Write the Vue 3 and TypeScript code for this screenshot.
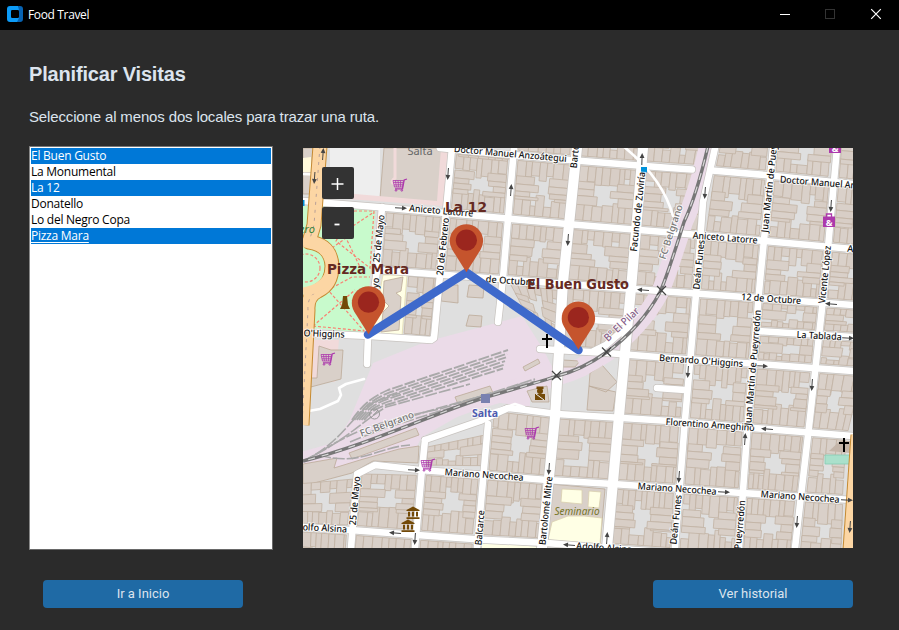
<script setup lang="ts">
import { ref } from 'vue'

type Pt = [number, number]
interface Lot { d: string; tone: number }
interface StreetLabel { t: string; x: number; y: number; r: number; w: number; c?: string }

const places = ['El Buen Gusto', 'La Monumental', 'La 12', 'Donatello', 'Lo del Negro Copa', 'Pizza Mara']
const selected = ref<string[]>(['El Buen Gusto', 'La 12', 'Pizza Mara'])
const focused = ref('Pizza Mara')

function toggle(name: string) {
  focused.value = name
  selected.value = selected.value.includes(name)
    ? selected.value.filter((n) => n !== name)
    : [...selected.value, name]
}

/* East-west streets, north to south */
const H: Record<string, Pt[]> = {
  top: [[303, 85], [853, 125]],
  A: [[440, 148], [480, 152], [570, 160], [670, 168], [715, 170.5], [765, 175], [853, 184]],
  B: [[303, 201], [377, 207], [480, 216], [567, 224], [670, 232.5], [765, 241], [853, 249]],
  C: [[377, 270], [487, 278], [540, 282], [633, 289], [695, 293.5], [758, 298], [853, 305]],
  T: [[758, 331], [853, 337]],
  D: [[540, 349], [607, 353], [670, 358], [758, 364], [853, 371]],
  E: [[480, 405], [518, 409], [557, 414], [623, 418], [670, 421], [778, 430], [853, 436]],
  F: [[303, 470], [352, 470], [375, 465], [420, 470], [487, 475], [547, 480], [613, 484], [670, 488], [742, 493], [853, 500]],
  G: [[303, 527], [350, 530], [417, 535], [487, 540], [547, 543], [607, 548], [853, 566]],
  end: [[303, 590], [853, 640]],
}
/* North-south streets, west to east */
const V: Record<string, Pt[]> = {
  left: [[298, 100], [286, 640]],
  m25: [[382, 207], [377, 270], [368, 337], [357, 475], [350, 548], [346, 600]],
  f20: [[456, 100], [452, 148], [440, 275], [432, 340], [422, 469], [415, 548], [411, 600]],
  g3: [[517, 100], [514, 148], [503, 278], [498, 323], [488, 424], [477, 548], [473, 600]],
  bart: [[580, 100], [577, 148], [563, 282], [555, 417], [542, 548], [538, 600]],
  facu: [[646, 100], [643, 148], [632, 278], [619, 416], [607, 548], [603, 600]],
  dean: [[724, 100], [715, 148], [703, 202], [697, 283], [685, 420], [675, 548], [671, 600]],
  juan: [[777, 100], [773, 148], [760, 281], [748, 420], [739, 548], [735, 600]],
  vice: [[840, 100], [837, 148], [825, 281], [810, 418], [795, 548], [790, 600]],
  right: [[912, 100], [906, 148], [890, 281], [850, 440], [846, 548], [846, 600]],
}

function lerpAt(line: Pt[], q: number, axis: 0 | 1): number {
  const o = axis === 0 ? 1 : 0
  for (let i = 1; i < line.length; i++) {
    if (q <= line[i][axis] || i === line.length - 1) {
      const a = line[i - 1]
      const b = line[i]
      return a[o] + ((q - a[axis]) / (b[axis] - a[axis])) * (b[o] - a[o])
    }
  }
  return 0
}
function cross(h: string, v: string): Pt {
  let x = 580
  let y = 300
  for (let i = 0; i < 12; i++) {
    y = lerpAt(H[h], x, 0)
    x = lerpAt(V[v], y, 1)
  }
  return [x, y]
}

let seed = 91
function rnd(): number {
  seed = (seed * 16807) % 2147483647
  return seed / 2147483647
}

const lots: Lot[] = []
function fillQuad(q: Pt[], inset = 5) {
  const [a, b, c, d] = q
  const W = Math.hypot(b[0] - a[0], b[1] - a[1])
  const Hh = Math.hypot(d[0] - a[0], d[1] - a[1])
  const P = (px: number, py: number): string => {
    const u = (inset + px) / W
    const v = (inset + py) / Hh
    const x = (1 - u) * (1 - v) * a[0] + u * (1 - v) * b[0] + u * v * c[0] + (1 - u) * v * d[0]
    const y = (1 - u) * (1 - v) * a[1] + u * (1 - v) * b[1] + u * v * c[1] + (1 - u) * v * d[1]
    return `${x.toFixed(1)} ${y.toFixed(1)}`
  }
  const w = W - inset * 2
  const h = Hh - inset * 2
  const box = (x0: number, y0: number, x1: number, y1: number) => {
    if (x1 - x0 < 1.5 || y1 - y0 < 1.5) return
    lots.push({ d: `M${P(x0, y0)}L${P(x1, y0)}L${P(x1, y1)}L${P(x0, y1)}Z`, tone: Math.floor(rnd() * 3) })
  }
  const band = h * 0.3
  let x = 0
  while (x < w) {
    const n = Math.min(w, x + 5 + rnd() * 5.5)
    box(x, 0, n, band * (rnd() < 0.12 ? 0.6 : 0.82 + rnd() * 0.5))
    x = n
  }
  x = 0
  while (x < w) {
    const n = Math.min(w, x + 5 + rnd() * 5.5)
    box(x, h - band * (rnd() < 0.12 ? 0.6 : 0.82 + rnd() * 0.5), n, h)
    x = n
  }
  let y = band * 0.95
  const stop = h - band * 0.95
  while (y < stop) {
    const n = Math.min(stop, y + 5 + rnd() * 4.5)
    box(0, y, w * (0.26 + rnd() * 0.2), n)
    box(w * (0.56 + rnd() * 0.22), y, w, n)
    y = n
  }
}
function block(h1: string, h2: string, v1: string, v2: string) {
  fillQuad([cross(h1, v1), cross(h1, v2), cross(h2, v2), cross(h2, v1)])
}
const vs = ['g3', 'bart', 'facu', 'dean', 'juan', 'vice', 'right']
for (let i = 0; i < vs.length - 1; i++) {
  block('top', 'A', vs[i], vs[i + 1])
  block('A', 'B', vs[i], vs[i + 1])
  block('B', 'C', vs[i], vs[i + 1])
  if (i > 0 && i < 4) block('C', 'D', vs[i], vs[i + 1])
  if (i > 3) {
    block('C', 'T', vs[i], vs[i + 1])
    block('T', 'D', vs[i], vs[i + 1])
  }
  if (i > 1) block('D', 'E', vs[i], vs[i + 1])
  block('E', 'F', vs[i], vs[i + 1])
  if (i !== 1) block('F', 'G', vs[i], vs[i + 1])
  block('G', 'end', vs[i], vs[i + 1])
}
block('A', 'B', 'f20', 'g3')
block('B', 'C', 'f20', 'g3')
block('B', 'C', 'm25', 'f20')
block('F', 'G', 'f20', 'g3')
block('F', 'G', 'm25', 'f20')
fillQuad([[298, 480], [357, 474], [351, 530], [298, 527]], 4)
block('G', 'end', 'left', 'm25')
block('G', 'end', 'm25', 'f20')
block('G', 'end', 'f20', 'g3')
fillQuad([[423, 443], [489, 425], [487, 475], [422, 470]])
fillQuad([[405, 272], [440, 275], [433, 340], [400, 337]], 4)
fillQuad([[503, 279], [563, 284], [560, 350], [527, 318]])
fillQuad([[456, 145], [514, 150], [512, 166], [454, 160]], 4)

const line = (p: Pt[]): string => 'M' + p.map((q) => q.join(' ')).join('L')
const majors = [line(V.bart), line(V.facu)]
const minors = [
  ...['B', 'C', 'D', 'G', 'T'].map((k) => line(H[k])),
  line([[440, 148], [480, 152], [570, 160], [670, 168], [692, 169.5]]),
  line([[712, 170.5], [765, 175], [853, 184]]),
  line([[425, 440], [480, 421], [508, 408], [518, 409], [557, 414], [623, 418], [670, 421], [778, 430], [853, 436]]),
  line(V.dean), line(V.juan), line(V.vice),
  line([[382, 207], [377, 270], [368, 337], [367, 364]]),
  line([[351, 548], [357, 474], ...H.F.slice(2)]),
  line([[452, 148], [440, 275], [434, 338], [431, 340], [370, 336]]),
  line([[303, 333], [370, 336]]),
  line([[425, 440], [422, 469], [415, 548]]),
  line([[514, 148], [503, 278], [498, 322]]),
  line([[488, 424], [477, 548]]),
  line([[657, 388], [685, 390]]),
  line([[593, 320], [623, 322]]),
  line([[594, 351], [606, 345], [628, 326]]),
]
const thin = [
  'M303 174L325 175', 'M303 412L320 409L338 401L341 395L339 388L346 384L364 379',
  'M623 146Q644 163 657 182Q668 198 673 216', 'M487 413L515 404L524 407',
]

const rail = 'M708 146C702 172 693 203 684 222C677 244 667 277 660 292C648 315 628 337 607 352C587 366 573 372 557 376C540 382 510 390 480 399C430 415 365 446 303 461'
const yard = Array.from({ length: 6 }, (_, i) =>
  `M${352 + i * 2.4} 420C${362 + i * 2} ${406 + i} ${370 + i} ${398 + i * 2} ${388 + i} ${390 + i * 2.6}L${508 - i} ${350 + i * 3.7}`)
const tails = [
  'M303 461C340 444 350 418 372 403L400 393', 'M303 461C347 440 361 422 386 407L470 384',
  'M310 458C350 433 370 423 440 409L535 379', 'M319 455C360 467 377 447 410 445',
  'M350 442C400 420 470 405 520 384', 'M370 432C420 410 480 398 535 381',
]

const labels: StreetLabel[] = [
  { t: 'Doctor Manuel Anzoátegui', x: 510, y: 157, r: 5, w: 113 },
  { t: 'Aniceto Latorre', x: 441, y: 214, r: 5, w: 64 },
  { t: 'de Octubre', x: 510, y: 284, r: 4, w: 49 },
  { t: 'Doctor Manuel Anzoátegui', x: 836, y: 187, r: 4.5, w: 113 },
  { t: 'Aniceto Latorre', x: 725, y: 241, r: 4.5, w: 65 },
  { t: 'Aniceto', x: 864, y: 253, r: 4.5, w: 34 },
  { t: '12 de Octubre', x: 771, y: 302, r: 4, w: 60 },
  { t: 'La Tablada', x: 819, y: 339, r: 3, w: 45 },
  { t: "Bernardo O'Higgins", x: 701, y: 364, r: 4, w: 84 },
  { t: "O'Higgins", x: 324, y: 337, r: 2, w: 41 },
  { t: 'Florentino Ameghino', x: 710, y: 428, r: 4, w: 89 },
  { t: 'Mariano Necochea', x: 484, y: 478, r: 4, w: 79 },
  { t: 'Mariano Necochea', x: 677, y: 492, r: 4, w: 79 },
  { t: 'Mariano Necochea', x: 800, y: 500, r: 4, w: 79 },
  { t: 'Adolfo Alsina', x: 319, y: 531, r: 3, w: 56 },
  { t: 'Adolfo Alsina', x: 604, y: 551, r: 4, w: 56 },
  { t: '25 de Mayo', x: 382, y: 239, r: -84, w: 48 },
  { t: 'Mayo', x: 378, y: 290, r: -84, w: 24 },
  { t: '20 de Febrero', x: 446, y: 247, r: -84, w: 58 },
  { t: 'Bartolomé', x: 579, y: 146, r: -84, w: 45 },
  { t: 'Facundo de Zuviría', x: 641, y: 212, r: -84, w: 80 },
  { t: 'Deán Funes', x: 702, y: 265, r: -84, w: 50 },
  { t: 'Juan Martín de Pueyrredón', x: 774, y: 174, r: -84, w: 118 },
  { t: 'Vicente López', x: 828, y: 275, r: -84, w: 58 },
  { t: 'Juan Martín de Pueyrredón', x: 756, y: 368, r: -85, w: 116 },
  { t: '25 de Mayo', x: 358, y: 501, r: -85, w: 49 },
  { t: 'Balcarce', x: 483, y: 528, r: -85, w: 35 },
  { t: 'Bartolomé Mitre', x: 549, y: 511, r: -84, w: 69 },
  { t: 'Deán Funes', x: 679, y: 520, r: -84, w: 50 },
  { t: 'Pueyrredón', x: 743, y: 525, r: -85, w: 49 },
  { t: 'FC Belgrano', x: 388, y: 427, r: -20, w: 57, c: 'rail-name' },
  { t: 'FC Belgrano', x: 674, y: 233, r: -72, w: 57, c: 'rail-name' },
  { t: 'B° El Pilar', x: 624, y: 327, r: -43, w: 44, c: 'area' },
]

/* One-way arrows: position and heading */
const arrows: [number, number, number][] = [
  [401, 208, 3], [448, 174, 94], [511, 190, -86], [568, 240, 94], [642, 159, -88], [705, 193, 94],
  [831, 206, 94], [643, 290, 184], [831, 304, 184], [848, 338, 3], [762, 366, 3], [688, 372, 94],
  [812, 385, 94], [767, 429, 184], [745, 439, -86], [679, 477, 94], [724, 492, 3], [847, 500, 3],
  [797, 522, 94], [549, 469, 94], [414, 470, 3], [395, 533, 184], [415, 539, 94], [569, 545, 184],
  [607, 538, -86], [323, 154, -86], [314.5, 178, 94], [850, 527, 94],
]
const carts: Pt[] = [[400, 185], [328, 359], [428, 465], [532, 433]]
const museums: Pt[] = [[413, 513], [408, 526]]
const crossings: Pt[] = [[661.5, 290.5], [606.5, 352], [556.5, 375.5]]
const bags: Pt[] = [[829, 221], [835, 147]]
const pins = [
  { name: 'La 12', x: 466.4, y: 240.7, tx: 445, ty: 211.5, w: 42 },
  { name: 'Pizza Mara', x: 368.5, y: 302.7, tx: 327, ty: 274, w: 82 },
  { name: 'El Buen Gusto', x: 578.4, y: 318, tx: 527, ty: 289, w: 102 },
]
</script>

<template>
  <div class="window">
    <header class="titlebar">
      <svg class="logo" width="16" height="16" viewBox="0 0 16 16">
        <path d="M3 0H11L13 3V13L11 16H3Q0 16 0 13V3Q0 0 3 0Z" fill="#0c9bf7" />
        <path d="M11 0H13Q16 0 16 3V13Q16 16 13 16H10L12 12V4Z" fill="#0763b3" />
        <rect x="4" y="4" width="8" height="8" rx="1.2" fill="#000" />
      </svg>
      <span class="app-name">Food Travel</span>
      <svg class="controls" width="119" height="30" viewBox="780 0 119 30">
        <path d="M780 14.5H790" stroke="#fff" />
        <rect x="825.5" y="9.5" width="9" height="9" fill="none" stroke="#333" />
        <path d="M871.2 9.2L880.8 18.8M880.8 9.2L871.2 18.8" stroke="#fff" stroke-width="1.2" />
      </svg>
    </header>

    <main class="content">
      <h1>Planificar Visitas</h1>
      <p class="hint">Seleccione al menos dos locales para trazar una ruta.</p>

      <div class="panes">
        <ul class="listbox">
          <li
            v-for="p in places"
            :key="p"
            :class="{ on: selected.includes(p), focus: focused === p }"
            @click="toggle(p)"
          ><span>{{ p }}</span></li>
        </ul>

        <svg class="map" width="550" height="400" viewBox="303 148 550 400">
          <defs>
            <g id="cart" fill="none" stroke="#ac39ac">
              <path d="M-7 -4.5H3.5L2.5 2H-5.5ZM-4.5 -4.5L-3.6 2M-2 -4.5L-1.6 2M.6 -4.5V2M-6.5 -2.4H3M-6 -.2H2.7" stroke-width=".8" />
              <path d="M7 -6L4.2 -5L2.5 3.8H-5" stroke-width="1.3" />
              <circle cx="-4" cy="5.4" r=".8" /><circle cx="1.8" cy="5.4" r=".8" />
            </g>
            <g id="museum" fill="#734a08">
              <path d="M-6.5 -3L0 -6.5L6.5 -3V-2H-6.5ZM-5 -1.3H-3V3.5H-5ZM-1 -1.3H1V3.5H-1ZM3 -1.3H5V3.5H3ZM-6.5 4.2H6.5V6H-6.5Z" />
            </g>
            <g id="arrow"><path d="M-6 0H3" stroke="#444" stroke-width="1" /><path d="M6 0L1 -2.4V2.4Z" fill="#444" /></g>
          </defs>

          <rect x="303" y="148" width="550" height="400" fill="#dfdfdf" />

          <!-- avenue surroundings, square and park -->
          <path d="M330 148H380V197H330Z" fill="#eeeeee" />
          <path d="M303 148H318L313 194H303Z" fill="#d9d0c9" stroke="#bba998" stroke-width=".8" />
          <path d="M303 158L311 157V172H303Z" fill="#fff9db" />
          <path d="M384 148H446L442 203L380 198Z" fill="#d9d0c9" stroke="#bba998" stroke-width=".8" />
          <path d="M441 148H448L443 206L320 197V191L437 201Z" fill="#f1dada" />
          <path d="M395 148V178Q388 184 398 184" fill="none" stroke="#f1dada" stroke-width="3" />
          <path d="M303 206H376L371 265L366 333L311 328L303 300Z" fill="#c8facc" />
          <g fill="none" stroke="#fa8072" stroke-width="1.2" stroke-dasharray="3 2">
            <path d="M354 211H374L370 268L336 241L354 211" />
            <path d="M332 248L346 238L360 267M326 209L344 232L374 212" />
            <path d="M313 326L364 331L328 290L352 277H370M313 326L355 290" />
            <circle cx="306" cy="268" r="14" />
          </g>
          <path d="M383 275H407L402 336L372 333Z" fill="#ffffe5" stroke="#e5ddb0" stroke-width=".8" />
          <path d="M384 281L403 277L401 291L396 293L401 297L399 330L381 332L383 312L389 306L383 300Z" fill="#d9d0c9" stroke="#bba998" stroke-width=".8" />
          <path d="M309 340H339L335 382L306 378Z" fill="#f1dada" />
          <path d="M319 346L331 350L343 350L341 379L307 388L309 378H317Z" fill="#d9d0c9" stroke="#bba998" stroke-width=".8" />

          <!-- freight yard -->
          <path d="M373 363L425 342L522 316L543 349L557 376L530 386L530 407L485 401L422 437L417 446L343 471L312 472L303 463V455L332 450L350 419Z" fill="#ebdbe8" />
          <path :d="rail" fill="none" stroke="#ebdbe8" stroke-width="19" />
          <g fill="#d9d0c9" stroke="#bba998" stroke-width=".8">
            <path d="M443 285H458V303L441 301ZM469 285L484 286L483 298L467 297ZM469 315L482 316L481 327L466 326Z" />
            <path d="M523 367L538 359L540 363L525 371ZM349 453L416 428L419 435L352 459Z" />
            <path d="M303 464L337 458L334 468L360 460L399 449L419 446L418 463L373 461L352 473L303 486Z" />
            <path d="M455 397L490 386L493 393L458 404ZM527 391L547 386L549 402L532 402Z" />
            <path d="M590 373L602 365L617 382L606 392L589 386ZM589 386L616 392L613 411L587 410ZM563 360L580 361L575 367H563Z" />
          </g>

          <!-- building lots -->
          <path v-for="(l, i) in lots" :key="i" :d="l.d" :class="['lot', 'tone' + l.tone]" />

          <!-- seminary -->
          <path d="M551 484L605 489L600 545L547 541Z" fill="#d9d0c9" stroke="#bba998" stroke-width=".8" />
          <path d="M562 489L582 490V504L561 502ZM589 491L601 492L599 508L588 507ZM552 522L568 516H584L602 518L600 544L548 540Z" fill="#ffffe5" stroke="#d9cfae" stroke-width=".8" />
          <path d="M482 542L540 547V548H482Z" fill="#ffffe5" />
          <path d="M829 451L840 441H850V453Z" fill="#c4b5a9" />
          <path d="M825 455H850V464H825Z" fill="#aae0cb" stroke="#87cbb2" stroke-width=".8" />

          <path :d="rail" fill="none" stroke="#ebdbe8" stroke-width="18" stroke-dasharray="265 1000" />

          <!-- streets -->
          <g class="casing">
            <path v-for="d in minors" :key="d" :d="d" stroke-width="8" />
            <path v-for="d in majors" :key="d" :d="d" stroke-width="11.5" />
          </g>
          <g class="road">
            <path v-for="d in thin" :key="d" :d="d" stroke-width="2.6" />
            <path v-for="d in minors" :key="d" :d="d" stroke-width="6.6" />
            <path v-for="d in majors" :key="d" :d="d" stroke-width="10" />
          </g>
          <g fill="none" stroke-linejoin="round">
            <path d="M320 146L314 225L309 242Q331 245 332 266Q332 284 318 291Q307 296 308 310L302 425" stroke="#c58a32" stroke-width="15" />
            <path d="M320 146L314 225L309 242Q331 245 332 266Q332 284 318 291Q307 296 308 310L302 425" stroke="#fcd6a4" stroke-width="13" />
            <path d="M320 146L314 225L309 242Q331 245 332 266Q332 284 318 291Q307 296 308 310L302 425" stroke="#b9a097" stroke-width="1" stroke-dasharray="3 5" />
            <path d="M303 243Q326 242 332 266Q328 288 303 292" stroke="#fcd6a4" stroke-width="9" />
            <path d="M857 435L849 550" stroke="#c58a32" stroke-width="13" />
            <path d="M857 435L849 550" stroke="#fcd6a4" stroke-width="11" />
          </g>

          <!-- tracks -->
          <g fill="none">
            <path v-for="d in yard" :key="d" :d="d" stroke="#a9a9a9" stroke-width="1.9" stroke-dasharray="11 2" />
            <path v-for="d in tails" :key="d" :d="d" stroke="#a9a9a9" stroke-width="1.6" stroke-dasharray="12 2" />
            <path :d="rail" stroke="#777" stroke-width="3.4" />
            <path :d="rail" stroke="#d9d9d9" stroke-width="1.2" stroke-dasharray="7 7" />
            <path v-for="c in crossings" :key="c[0]" :d="`M${c[0] - 4.5} ${c[1] - 4.5}l9 9m0-9l-9 9`" stroke="#444" stroke-width="1.2" />
          </g>

          <use v-for="(a, i) in arrows" :key="'a' + i" href="#arrow" :transform="`translate(${a[0]} ${a[1]}) rotate(${a[2]})`" />

          <!-- points of interest -->
          <use v-for="(c, i) in carts" :key="'c' + i" href="#cart" :transform="`translate(${c[0]} ${c[1]})`" />
          <use v-for="(m, i) in museums" :key="'m' + i" href="#museum" :transform="`translate(${m[0]} ${m[1]})`" />
          <g v-for="b in bags" :key="b[0]" :transform="`translate(${b[0]} ${b[1]})`">
            <path d="M-2.5 -4V-7H2.5V-4" fill="none" stroke="#ac39ac" stroke-width="1.3" />
            <rect x="-6" y="-4.5" width="12" height="10.5" fill="#ac39ac" />
            <text y="4.5" class="amp">&amp;</text>
          </g>
          <path d="M547 334V348M542 339H552M844 438V452M839 443H849" stroke="#000" stroke-width="2" />
          <path d="M343 296H347L348 305L350 309H340L342 305Z" fill="#734a08" />
          <g fill="#734a08"><circle cx="540" cy="391" r="3" /><path d="M536.5 386.5H543.5V389H536.5ZM535 394H545V400H535Z" /></g>
          <path d="M536 394L544 400" stroke="#eee" stroke-width="1" />
          <rect x="641" y="167" width="6" height="6" fill="#0092da" />
          <rect x="303" y="200" width="1.5" height="6" fill="#0092da" />
          <rect x="481" y="394" width="9" height="9" fill="#7981b0" />
          <g fill="none" stroke="#999"><circle cx="374.5" cy="414" r="5" /><path d="M371 418L378 410" /></g>

          <text
            v-for="(s, i) in labels"
            :key="'s' + i"
            :class="['street', s.c]"
            :transform="`translate(${s.x} ${s.y}) rotate(${s.r})`"
            :textLength="s.w"
            lengthAdjust="spacingAndGlyphs"
          >{{ s.t }}</text>
          <text class="poi" x="420" y="155">Salta</text>
          <text class="park" x="307" y="233">ero</text>
          <text class="seminary" x="577" y="515">Seminario</text>
          <text class="station" x="485" y="416.500">Salta</text>

          <!-- planned route -->
          <path d="M368 334.500L466.400 272.500L578.500 350" class="route" />
          <g v-for="p in pins" :key="p.name">
            <path
              :transform="`translate(${p.x} ${p.y})`"
              d="M0 31.500L-14.200 9A16.700 16.700 0 1 1 14.200 9Z"
              fill="#c5542d"
            />
            <circle :cx="p.x" :cy="p.y - .5" r="10.600" fill="#9b261e" />
            <text class="pin-name" :x="p.tx" :y="p.ty" :textLength="p.w" lengthAdjust="spacingAndGlyphs">{{ p.name }}</text>
          </g>

          <!-- zoom buttons -->
          <g class="zoom">
            <rect x="322" y="167" width="32" height="32" rx="2" />
            <rect x="322" y="207" width="32" height="32" rx="2" />
            <path d="M331.500 184H343.500M337.500 178V190" stroke="#fff" stroke-width="1.500" />
            <path d="M334.500 224.500H339.500" stroke="#fff" stroke-width="1.800" />
          </g>
        </svg>
      </div>

      <footer class="actions">
        <button type="button">Ir a Inicio</button>
        <button type="button">Ver historial</button>
      </footer>
    </main>
  </div>
</template>

<style>
body {
  margin: 0;
  background: #2b2b2b;
}
</style>

<style scoped>
.window {
  width: 899px;
  height: 630px;
  overflow: hidden;
  background: #2b2b2b;
  font-family: 'Liberation Sans', Arial, sans-serif;
}
.titlebar {
  display: flex;
  align-items: center;
  box-sizing: border-box;
  height: 30px;
  padding-left: 7px;
  background: #000;
  color: #fff;
}
.logo {
  margin-bottom: 2px;
}
.app-name {
  margin-left: 5px;
  font: 12px/30px 'Open Sans', sans-serif;
  letter-spacing: -0.35px;
}
.controls {
  margin-left: auto;
}
.content {
  padding: 0 46px 0 29px;
}
h1 {
  margin: 0;
  padding-top: 31px;
  color: #dce4ee;
  font-size: 20px;
  line-height: 26px;
  font-weight: 700;
  letter-spacing: -0.17px;
}
.hint {
  margin: 20px 0 19px;
  color: #dce4ee;
  font-size: 15px;
  line-height: 20px;
  letter-spacing: -0.145px;
}
.panes {
  display: flex;
  justify-content: space-between;
  align-items: flex-start;
}
.listbox {
  box-sizing: border-box;
  width: 244px;
  height: 404px;
  margin: 0;
  padding: 1px;
  list-style: none;
  background: #fff;
  border: 1px solid #696969;
  border-top-color: #777;
  border-left-color: #888;
}
.listbox li {
  height: 16px;
  color: #000;
  font: 12px/16px 'Open Sans', sans-serif;
  letter-spacing: -0.25px;
}
.listbox li.on {
  background: #0078d7;
  color: #fff;
}
.listbox li.focus span {
  text-decoration: underline;
  text-underline-offset: 2px;
}
.map {
  display: block;
  margin-top: 2px;
}
.lot {
  fill: #d9d0c9;
  stroke: #c2b2a3;
  stroke-width: 0.8;
}
.tone1 {
  fill: #d8cec6;
}
.tone2 {
  fill: #dad1ca;
}
.casing path {
  fill: none;
  stroke: #c8c4c0;
  stroke-linejoin: round;
  stroke-linecap: round;
}
.road path {
  fill: none;
  stroke: #fff;
  stroke-linejoin: round;
  stroke-linecap: round;
}
.street {
  font: 500 9.5px 'Noto Sans', sans-serif;
  text-anchor: middle;
  fill: #111;
  stroke: rgba(255, 255, 255, 0.75);
  stroke-width: 2px;
  paint-order: stroke;
}
.rail-name {
  fill: #777;
}
.area {
  font-size: 10.5px;
  fill: #886088;
}
.poi {
  font: 11px 'Noto Sans', sans-serif;
  text-anchor: middle;
  fill: #666;
}
.park {
  font: italic 11px 'Noto Sans', sans-serif;
  text-anchor: middle;
  fill: #32823a;
}
.seminary {
  font: italic 10px 'Noto Sans', sans-serif;
  text-anchor: middle;
  fill: #75752a;
}
.station {
  font: bold 10.5px 'Noto Sans', sans-serif;
  text-anchor: middle;
  fill: #4d5bb0;
  stroke: rgba(255, 255, 255, 0.7);
  stroke-width: 2px;
  paint-order: stroke;
}
.amp {
  font: bold 9px 'Noto Sans', sans-serif;
  text-anchor: middle;
  fill: #fff;
}
.route {
  fill: none;
  stroke: #3e69cb;
  stroke-width: 8.5;
  stroke-linecap: round;
  stroke-linejoin: round;
}
.pin-name {
  font: bold 13.5px 'DejaVu Sans', sans-serif;
  fill: #652a22;
}
.zoom rect {
  fill: #333;
}
.actions {
  display: flex;
  justify-content: space-between;
  padding: 30px 0 0 14px;
}
.actions button {
  width: 200px;
  height: 28px;
  padding: 0;
  border: 0;
  border-radius: 4px;
  background: #1f6aa5;
  color: #dce4ee;
  font: 13px/28px Roboto, sans-serif;
}
</style>
